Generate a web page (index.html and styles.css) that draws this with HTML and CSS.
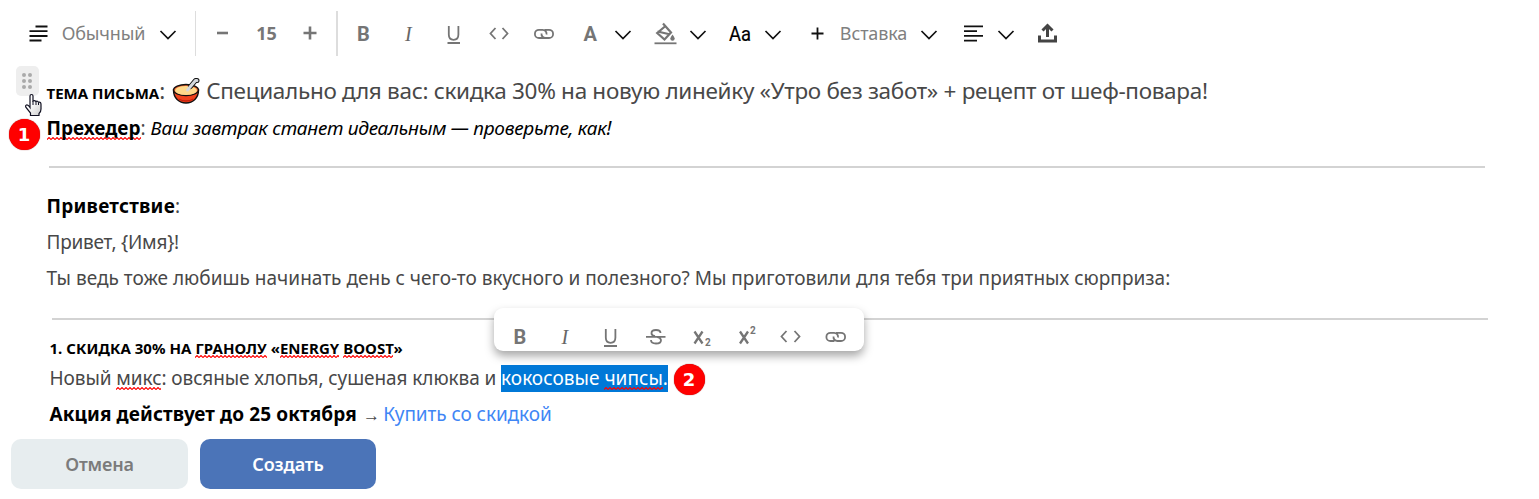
FILE: index.html
```html
<!DOCTYPE html>
<html lang="ru">
<head>
<meta charset="utf-8">
<title>Редактор письма</title>
<link rel="stylesheet" href="styles.css">
</head>
<body>
<header class="toolbar">
  <svg class="ic" width="29" height="64" viewBox="24 0 29 64"><path class="ink" d="M35.5 26.500H47.500M29.500 31.200H47.500M29.500 36H47.500M29.500 40.500H41.500"/></svg>
  <span class="cell label style-name"><span class="t-style">Обычный</span></span>
  <svg class="ic" width="28" height="64" viewBox="154 0 28 64"><path class="ink chev" d="M160.500 31L168 38.500L175.500 31"/></svg>
  <svg class="ic" width="27" height="64" viewBox="182 0 27 64"><path class="rule" d="M195.500 11V56"/></svg>
  <svg class="ic" width="27" height="64" viewBox="209 0 27 64"><path class="gray heavy" d="M217 33H228"/></svg>
  <span class="cell size"><span class="t-size">15</span></span>
  <svg class="ic" width="26" height="64" viewBox="297 0 26 64"><path class="gray heavy" d="M303.500 33H316.500M310 26.500V39.500"/></svg>
  <svg class="ic" width="28" height="64" viewBox="323 0 28 64"><path class="rule wide" d="M337 11V56"/></svg>
  <svg class="ic" width="25" height="64" viewBox="351 0 25 64"><text class="g-bold" x="357" y="40.500">B</text></svg>
  <svg class="ic" width="65" height="64" viewBox="376 0 65 64"><text class="g-italic" x="405" y="40.500">I</text></svg>
  <svg class="ic" width="25" height="64" viewBox="441 0 25 64"><path class="gray" d="M448.800 26V34.500Q448.800 39.800 453.600 39.800Q458.400 39.800 458.400 34.500V26M447.500 43H460"/></svg>
  <svg class="ic" width="66" height="64" viewBox="466 0 66 64"><path class="gray" d="M495.500 28L490.500 33.500L495.500 39M502.500 28L507.500 33.500L502.500 39"/></svg>
  <svg class="ic" width="24" height="64" viewBox="532 0 24 64"><path class="gray" d="M543.500 38H539A4 4 0 0 1 539 29.800H542.500A4 4 0 0 1 546.500 34.500M544.500 29.800H549A4 4 0 0 1 549 38H545.500A4 4 0 0 1 541.500 33.500"/></svg>
  <svg class="ic gap-a" width="27" height="64" viewBox="577 0 27 64"><text class="g-bold" x="583.500" y="40.500">A</text></svg>
  <svg class="ic" width="38" height="64" viewBox="604 0 38 64"><path class="ink chev" d="M615.500 31L623 38.500L630.500 31"/></svg>
  <svg class="ic" width="47" height="64" viewBox="642 0 47 64"><path class="gray bucket" d="M663 23.500L671 32.500L664.500 39.500L657.200 33L665.500 26M657.500 31.500L669.500 34.200"/><path class="graydot" d="M672.500 34.500Q670.300 37.500 670.300 38.500A2.200 2.200 0 0 0 674.700 38.500Q674.700 37.500 672.500 34.500Z"/><path class="gray" d="M654.500 43.300H676.500"/></svg>
  <svg class="ic" width="18" height="64" viewBox="689 0 18 64"><path class="ink chev" d="M690.500 31L698 38.500L705.500 31"/></svg>
  <svg class="ic gap-b" width="39" height="64" viewBox="720 0 39 64"><text class="g-case" x="729" y="40.500" textLength="22" lengthAdjust="spacingAndGlyphs">Aa</text></svg>
  <svg class="ic" width="28" height="64" viewBox="759 0 28 64"><path class="ink chev" d="M765.500 31L773 38.500L780.500 31"/></svg>
  <svg class="ic gap-c" width="41" height="64" viewBox="797 0 41 64"><path class="ink" d="M811.500 33.500H823.500M817.500 27.500V39.500"/></svg>
  <span class="cell label insert"><span class="t-insert">Вставка</span></span>
  <svg class="ic" width="40" height="64" viewBox="909 0 40 64"><path class="ink chev" d="M921.500 31L929 38.500L936.500 31"/></svg>
  <svg class="ic" width="48" height="64" viewBox="949 0 48 64"><path class="ink" d="M964 26.300H983M964 31.200H977M964 35.800H983M964 40.600H977"/></svg>
  <svg class="ic" width="18" height="64" viewBox="997 0 18 64"><path class="ink chev" d="M998.500 31L1006 38.500L1013.500 31"/></svg>
  <svg class="ic" width="65" height="64" viewBox="1015 0 65 64"><path class="upload" d="M1039.500 35.500V41H1055.500V35.500M1047.500 37V27M1042.500 30.500L1047.500 25.500L1052.500 30.500"/></svg>
</header>

<main class="editor">
  <p class="line subject"><b class="t-subj">ТЕМА ПИСЬМА</b><span class="colon">:</span><svg class="bowl" width="29" height="28" viewBox="172 77 29 28"><path d="M173.500 90C173.500 98 179 103 186 103S198.500 98 198.500 90Z" fill="#f0421c" stroke="#111" stroke-width="1.400"/><path d="M178.500 99Q186 103 193.500 99" stroke="#c9200c" stroke-width="1.300" fill="none"/><ellipse cx="186" cy="90" rx="12.500" ry="5.500" fill="#f2622c" stroke="#111" stroke-width="1.300"/><ellipse cx="186" cy="90.500" rx="11" ry="4.600" fill="#ffd98a"/><path d="M190.500 86.500L195.500 80.500H197" stroke="#111" stroke-width="5" stroke-linecap="round" stroke-linejoin="round" fill="none"/><path d="M187.500 90L195.500 80.500H197" stroke="#d3d7dc" stroke-width="3" stroke-linecap="round" stroke-linejoin="round" fill="none"/></svg><span class="t-headline">Специально для вас: скидка 30% на новую линейку «Утро без забот» + рецепт от шеф-повара!</span></p>
  <p class="line"><b><span class="t-pre typo">Прехедер</span></b><span class="colon">:</span><i class="t-ital">Ваш завтрак станет идеальным — проверьте, как!</i></p>
  <hr class="sep first">
  <p class="line"><b class="t-greet">Приветствие</b><span>:</span></p>
  <p class="line"><span class="t-hi">Привет, {Имя}!</span></p>
  <p class="line"><span class="t-body">Ты ведь тоже любишь начинать день с чего-то вкусного и полезного? Мы приготовили для тебя три приятных сюрприза:</span></p>
  <hr class="sep second">
  <section class="offer">
    <h2 class="offer-title"><span class="t-offer">1. СКИДКА 30% НА <span class="typo">ГРАНОЛУ</span> «<span class="typo">ENERGY</span> <span class="typo">BOOST</span>»</span></h2>
    <p class="line"><span class="t-mix">Новый <span class="typo">микс</span>: овсяные хлопья, сушеная клюква и&nbsp;</span><span class="selected"><span class="t-sel">кокосовые <span class="typo">чипсы</span>.</span></span></p>
    <p class="line"><b class="t-promo">Акция действует до 25 октября</b><span class="arrow">→</span><a class="t-link">Купить со скидкой</a></p>
  </section>
</main>

<footer class="actions">
  <button class="btn cancel"><span class="t-cancel">Отмена</span></button>
  <button class="btn create"><span class="t-create">Создать</span></button>
</footer>

<div class="handle"><i></i><i></i><i></i><i></i><i></i><i></i></div>
<svg class="cursor" width="20" height="24" viewBox="24 93 20 24"><defs><linearGradient id="hand" x1="0" y1="0" x2="1" y2="1"><stop offset=".4" stop-color="#fff"/><stop offset="1" stop-color="#ccc"/></linearGradient></defs><path d="M30 105V96Q30 94.500 31.500 94.500T33 96V101Q34.500 100 36 101.500Q37.500 100.500 38.500 102.300Q41 101.500 41 104.500V109Q41 112 39 113.500V115.500H30.500V113L26 107.500Q25 105.500 26.500 105Q28 104.500 30 107.500Z" fill="url(#hand)" stroke="#111122" stroke-width="1.200"/><path d="M33 101V105M36 102V105M38.500 102.500V105" stroke="#111122"/></svg>
<div class="badge one">1</div>
<div class="badge two">2</div>

<div class="bubble">
  <svg width="370" height="43" viewBox="494 308 370 43">
    <text class="g-bold" x="513.500" y="343.500">B</text>
    <text class="g-italic" x="561.500" y="343.500">I</text>
    <path class="gray" d="M605.800 329V337.500Q605.800 342.800 610.600 342.800Q615.400 342.800 615.400 337.500V329M604 346H617"/>
    <path class="gray" d="M660.500 333Q660.500 330 656 330T651.500 333.200Q651.500 335.500 655 336.200M646 336.800H665.500M657 337Q661 338 661 340.200Q661 343.500 656 343.500T651 340"/>
    <path class="gray heavy x" d="M694.500 331.500L702.500 343.500M702.500 331.500L694.500 343.500M740 331.500L748 343.500M748 331.500L740 343.500"/>
    <text class="g-small" x="705" y="346">2</text>
    <text class="g-small" x="750" y="334">2</text>
    <path class="gray" d="M786.500 331L781.500 336.500L786.500 342M794.500 331L799.500 336.500L794.500 342"/>
    <path class="gray" d="M834.500 341H830.500A4 4 0 0 1 830.500 332.800H834A4 4 0 0 1 838 337.500M836 332.800H841A4 4 0 0 1 841 341H837.500A4 4 0 0 1 833.500 336.500"/>
  </svg>
</div>
</body>
</html>
```

FILE: styles.css
```css
* { box-sizing: border-box; }
body {
  margin: 0;
  width: 1539px;
  height: 499px;
  overflow: hidden;
  position: relative;
  background: #fff;
  color: #484848;
  font-family: "Noto Sans", "Open Sans", sans-serif;
  font-size: 19px;
}
p, h2, hr { margin: 0; }
b, h2 { color: #000; font-weight: 700; }

.toolbar { display: flex; height: 64px; padding-left: 24px; }
.ic { display: block; flex: none; }
.ic path, .bubble path { fill: none; stroke-width: 1.8; }
.ic .ink { stroke: #111; }
.ic .chev { stroke-width: 1.7; }
.ic .rule { stroke: #ddd; stroke-width: 1; }
.ic .rule.wide { stroke-width: 2; }
.ic .gray, .bubble .gray { stroke: #757575; }
.ic .heavy, .bubble .heavy { stroke-width: 2.6; }
.ic .bucket { stroke-width: 2.2; }
.bubble .heavy.x { stroke-width: 2.3; }
.ic .graydot { fill: #757575; }
.ic .upload { stroke: #444; stroke-width: 3; }
.g-bold { font: 700 20px Roboto, sans-serif; fill: #757575; }
.g-italic { font: italic 20px "Liberation Serif", serif; fill: #666; }
.g-case { font: 400 20px Roboto, sans-serif; fill: #000; stroke: #000; stroke-width: .2; }
.g-small { font: 700 10px Roboto, sans-serif; fill: #757575; }
.gap-a { margin-left: 21px; }
.gap-b { margin-left: 13px; }
.gap-c { margin-left: 10px; }
.cell {
  display: flex;
  flex: none;
  justify-content: center;
  line-height: 67px;
  white-space: nowrap;
  font-size: 18px;
  color: #777;
}
.label { color: #808080; letter-spacing: -.15px; }
.style-name { width: 101px; }
.insert { width: 71px; }
.size { width: 61px; font-weight: 700; }

.editor { padding: 8.500px 0 0 46.500px; }
.line { display: flex; align-items: baseline; height: 36px; line-height: 36px; white-space: nowrap; }
.subject { font-size: 22.500px; margin-bottom: 1px; }
.t-subj { font-size: 15px; }
.bowl { align-self: center; flex: none; margin: 0 5.500px 0 6.500px; }
.t-headline { letter-spacing: -.307px; }
.t-ital { color: #000; margin-left: 5px; letter-spacing: -.28px; }
.t-greet { letter-spacing: .25px; }
.t-hi { letter-spacing: -.24px; }
.t-body { letter-spacing: .02px; }
.t-offer { letter-spacing: .03px; }
.t-mix { letter-spacing: -.08px; }
.t-sel { letter-spacing: .03px; }
.t-promo { letter-spacing: .11px; }
.t-link { color: #3f86f5; letter-spacing: -.08px; }
.sep { height: 2px; border: 0; background: #d3d3d3; }
.sep.first { margin: 20.500px 54px 19.500px 2.500px; }
.sep.second { margin: 22.500px 51px 17px 5.500px; }
.offer { padding-left: 3px; }
.offer-title { font-size: 15px; height: 22px; line-height: 22px; margin-bottom: 1px; white-space: nowrap; }
.typo {
  background: url("data:image/svg+xml,%3Csvg xmlns='http://www.w3.org/2000/svg' width='4' height='3'%3E%3Cpath d='M-1 1.500L0 2.500L2 .5L4 2.500L5 1.500' fill='none' stroke='red' stroke-width='1.100'/%3E%3C/svg%3E") repeat-x left bottom 1px;
}
.offer-title .typo { background-position: left bottom; }
.selected { display: block; height: 27px; line-height: 27px; background: #0078d7; color: #fff; }
.arrow { margin: 0 3.300px 0 6px; font-size: 17px; }

.actions { position: relative; display: flex; gap: 12px; padding: 7px 0 0 11px; }
.btn { width: 177px; height: 50px; border: 0; border-radius: 10px; font: 600 18px/50px "Noto Sans", sans-serif; padding: 0; }
.btn span { letter-spacing: -.15px; }
.cancel { background: #e7edef; color: #7b7b7b; }
.create { background: #4b74b8; color: #fff; width: 176px; }

.handle {
  position: absolute; left: 16px; top: 66px; width: 23px; height: 30px; padding-right: 1px;
  display: grid; grid-template-columns: 4px 4px; gap: 2px; place-content: center;
  background: #eee; border-radius: 5px;
}
.handle i { width: 4px; height: 4px; border-radius: 50%; background: #aaa; }
.cursor { position: absolute; left: 24px; top: 93px; }
.badge {
  position: absolute; width: 31px; height: 31px; border-radius: 50%; background: #f00; color: #fff;
  font: 700 18px/31px "DejaVu Sans", sans-serif; text-align: center; box-shadow: 0 0 1px #800;
}
.badge.one { left: 8.500px; top: 118.500px; }
.badge.two { left: 673.500px; top: 363.500px; }
.bubble {
  position: absolute; left: 494px; top: 308px; width: 370px; height: 43px;
  background: #fff; border-radius: 9px; box-shadow: 0 5px 10px rgba(0,0,0,.35);
}
.bubble svg { display: block; }
```
